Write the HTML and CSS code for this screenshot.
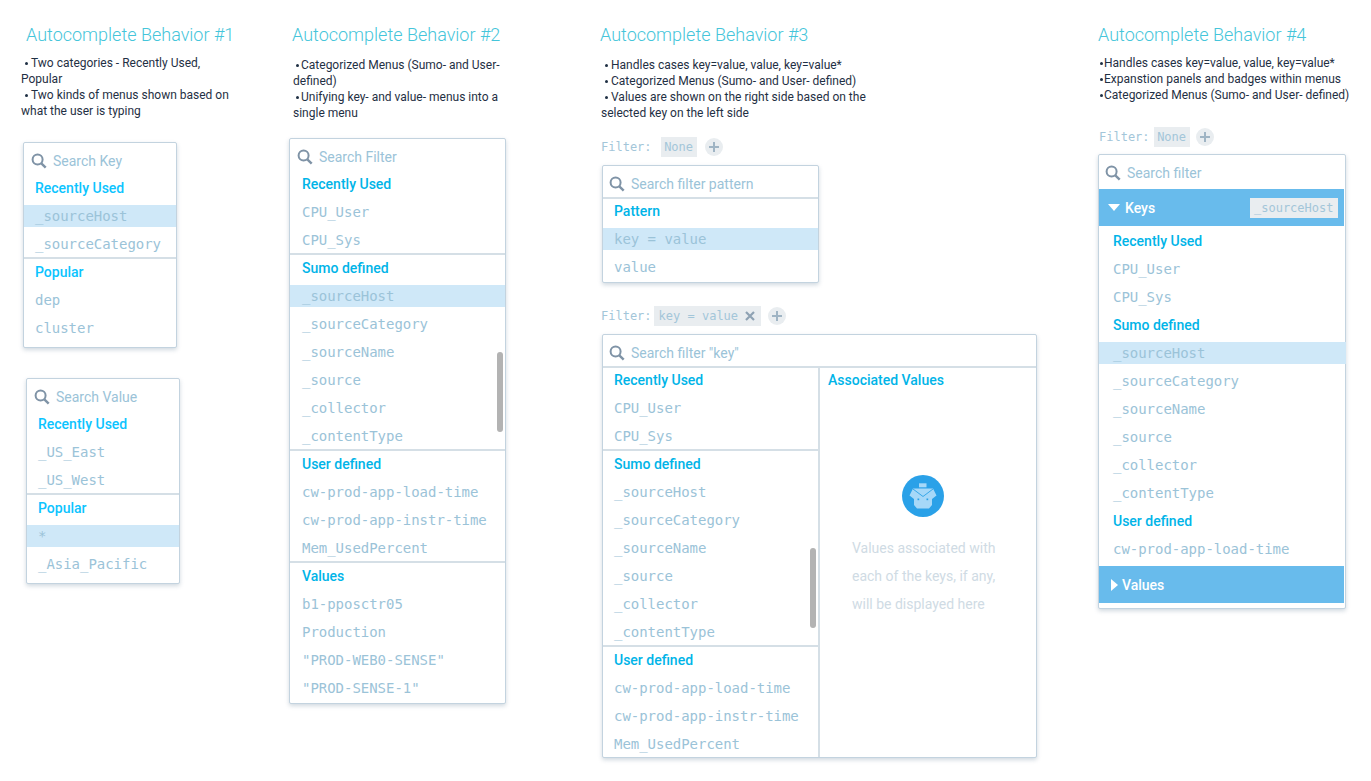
FILE: index.html
```html
<!DOCTYPE html>
<html lang="en">
<head>
<meta charset="utf-8">
<title>Autocomplete Behavior</title>
<link rel="stylesheet" href="styles.css">
</head>
<body>
<svg class="defs" width="0" height="0"><symbol id="s" viewBox="0 0 16 16"><circle cx="6.6" cy="6.6" r="5" fill="none" stroke="#7f93a6" stroke-width="2"/><path d="M10.3 10.3l4.4 4.4" stroke="#7f93a6" stroke-width="2.4" fill="none"/></symbol></svg>
<main class="page">
  <section class="col col1">
    <h2 class="title">Autocomplete Behavior #1</h2>
    <p class="notes"><span class="b"></span>Two categories - Recently Used, Popular<br><span class="b"></span>Two kinds of menus shown based on what the user is typing</p>
    <div class="box box-key">
      <div class="search"><svg class="ic"><use href="#s"/></svg>Search Key</div>
      <div class="sec">
        <div class="head bright">Recently Used</div>
        <div class="row hl">_sourceHost</div>
        <div class="row">_sourceCategory</div>
      </div>
      <div class="sec">
        <div class="head bright">Popular</div>
        <div class="row">dep</div>
        <div class="row">cluster</div>
      </div>
    </div>
    <div class="box box-value">
      <div class="search"><svg class="ic"><use href="#s"/></svg>Search Value</div>
      <div class="sec">
        <div class="head bright">Recently Used</div>
        <div class="row">_US_East</div>
        <div class="row">_US_West</div>
      </div>
      <div class="sec">
        <div class="head bright">Popular</div>
        <div class="row hl">*</div>
        <div class="row">_Asia_Pacific</div>
      </div>
    </div>
  </section>

  <section class="col col2">
    <h2 class="title">Autocomplete Behavior #2</h2>
    <p class="notes"><span class="b"></span>Categorized Menus (Sumo- and User-defined)<br><span class="b"></span>Unifying key- and value- menus into a single menu</p>
    <div class="box box-two">
      <div class="search"><svg class="ic"><use href="#s"/></svg>Search Filter</div>
      <div class="sec">
        <div class="head">Recently Used</div>
        <div class="row">CPU_User</div>
        <div class="row">CPU_Sys</div>
      </div>
      <div class="sec scrolled">
        <div class="head">Sumo defined</div>
        <div class="row hl">_sourceHost</div>
        <div class="row">_sourceCategory</div>
        <div class="row">_sourceName</div>
        <div class="row">_source</div>
        <div class="row">_collector</div>
        <div class="row">_contentType</div>
        <i class="thumb"></i>
      </div>
      <div class="sec">
        <div class="head">User defined</div>
        <div class="row">cw-prod-app-load-time</div>
        <div class="row">cw-prod-app-instr-time</div>
        <div class="row">Mem_UsedPercent</div>
      </div>
      <div class="sec">
        <div class="head">Values</div>
        <div class="row">b1-pposctr05</div>
        <div class="row">Production</div>
        <div class="row">"PROD-WEB0-SENSE"</div>
        <div class="row">"PROD-SENSE-1"</div>
      </div>
    </div>
  </section>

  <section class="col col3">
    <h2 class="title">Autocomplete Behavior #3</h2>
    <p class="notes"><span class="b"></span>Handles cases key=value, value, key=value*<br><span class="b"></span>Categorized Menus (Sumo- and User- defined)<br><span class="b"></span>Values are shown on the right side based on the selected key on the left side</p>
    <div class="filter f-none"><span class="flabel">Filter:</span><span class="chip none">None</span><span class="plus"></span></div>
    <div class="box box-pattern">
      <div class="search ruled"><svg class="ic"><use href="#s"/></svg>Search filter pattern</div>
      <div class="sec">
        <div class="head">Pattern</div>
        <div class="row hl">key = value</div>
        <div class="row">value</div>
      </div>
    </div>
    <div class="filter f-kv"><span class="flabel">Filter:</span><span class="chip kv">key = value<svg class="x" viewBox="0 0 10 10"><path d="M1 1l8 8M9 1l-8 8" stroke="#8ea2b3" stroke-width="2.2"/></svg></span><span class="plus"></span></div>
    <div class="box box-wide">
      <div class="search ruled"><svg class="ic"><use href="#s"/></svg>Search filter "key"</div>
      <div class="split">
        <div class="left">
          <div class="sec">
            <div class="head">Recently Used</div>
            <div class="row">CPU_User</div>
            <div class="row">CPU_Sys</div>
          </div>
          <div class="sec scrolled">
            <div class="head">Sumo defined</div>
            <div class="row">_sourceHost</div>
            <div class="row">_sourceCategory</div>
            <div class="row">_sourceName</div>
            <div class="row">_source</div>
            <div class="row">_collector</div>
            <div class="row">_contentType</div>
            <i class="thumb"></i>
          </div>
          <div class="sec">
            <div class="head">User defined</div>
            <div class="row">cw-prod-app-load-time</div>
            <div class="row">cw-prod-app-instr-time</div>
            <div class="row">Mem_UsedPercent</div>
          </div>
        </div>
        <div class="right">
          <div class="head assoc">Associated Values</div>
          <svg class="bot" viewBox="0 0 42 42">
            <circle cx="21" cy="21" r="21" fill="#2aa1e8"/>
            <rect x="17" y="8.300" width="7.500" height="4" fill="#a6d8f8"/>
            <path d="M11 13.500H31L34.500 20.500 30 24V30L27 33.500H15L12 30V24L7.500 20.500Z" fill="#a6d8f8"/>
            <path d="M11 14l10 7.500 10-7.500" fill="none" stroke="#2aa1e8" stroke-width=".9"/>
            <rect x="15.500" y="23.500" width="1.700" height="1.700" fill="#2aa1e8"/>
            <rect x="24.500" y="23.500" width="1.700" height="1.700" fill="#2aa1e8"/>
          </svg>
          <p class="empty">Values associated with<br>each of the keys, if any,<br>will be displayed here</p>
        </div>
      </div>
    </div>
  </section>

  <section class="col col4">
    <h2 class="title">Autocomplete Behavior #4</h2>
    <p class="notes"><span class="b"></span>Handles cases key=value, value, key=value*<br><span class="b"></span>Expanstion panels and badges within menus<br><span class="b"></span>Categorized Menus (Sumo- and User- defined)</p>
    <div class="filter f-four"><span class="flabel">Filter:</span><span class="chip none">None</span><span class="plus"></span></div>
    <div class="box box-four">
      <div class="search"><svg class="ic"><use href="#s"/></svg>Search filter</div>
      <div class="bar keys"><i class="tri down"></i>Keys<span class="chip badge">_sourceHost</span></div>
      <div class="plain first">
        <div class="head">Recently Used</div>
        <div class="row">CPU_User</div>
        <div class="row">CPU_Sys</div>
        <div class="head">Sumo defined</div>
        <div class="row hl">_sourceHost</div>
        <div class="row">_sourceCategory</div>
        <div class="row">_sourceName</div>
        <div class="row">_source</div>
        <div class="row">_collector</div>
        <div class="row">_contentType</div>
        <div class="head">User defined</div>
        <div class="row">cw-prod-app-load-time</div>
      </div>
      <div class="bar vals"><i class="tri side"></i>Values</div>
    </div>
  </section>
</main>
</body>
</html>
```

FILE: styles.css
```css
* { box-sizing: border-box; }
html, body { margin: 0; padding: 0; background: #fff; }
body { width: 1371px; height: 781px; overflow: hidden; font-family: Roboto, "Noto Sans CJK JP", sans-serif; }
.defs { position: absolute; }
.page { display: flex; align-items: flex-start; }
.col { flex: none; }
.col1 { width: 268px; margin-left: 21px; }
.col2 { width: 311px; }
.col3 { width: 498px; }
.col4 { width: 273px; }

.title { margin: 24px 0 0; height: 22px; font-size: 18px; line-height: 22px; font-weight: 300; color: #45c5da; white-space: nowrap; }
.col1 .title { margin-left: 5px; }
.col2 .title { margin-left: 3px; }

.notes { height: 64px; margin: 9px 0 0; font-size: 12px; line-height: 16px; color: #1f3044; }
.b { display: inline-block; width: 10px; height: 16px; padding-top: 7px; vertical-align: top; }
.b::before { content: ""; display: block; width: 3px; height: 3px; margin: 0 auto; border-radius: 50%; background: #1f3044; }
.col1 .notes { width: 215px; }
.col2 .notes { width: 218px; margin-top: 11px; margin-left: 4px; }
.col2 .b { width: 8px; }
.col3 .notes { width: 270px; margin-top: 11px; margin-left: 1px; }
.col4 .notes { width: 262px; height: 48px; white-space: nowrap; }
.col4 .b { width: 6px; }

.box { background: #fff; border: 1px solid #c3d3df; border-radius: 2px; box-shadow: 0 2px 4px rgba(90, 120, 145, .28); }
.box-key { width: 154px; margin: 23px 0 0 2px; padding-bottom: 8px; }
.box-value { width: 154px; margin: 30px 0 0 5px; padding-bottom: 8px; }
.box-two { width: 217px; margin-top: 17px; padding-bottom: 4px; }
.box-pattern { width: 217px; margin: 8px 0 0 2px; padding-bottom: 4px; }
.box-wide { width: 435px; margin: 8px 0 0 2px; }
.box-four { width: 248px; margin-top: 7px; padding-bottom: 5px; }

.search { display: flex; align-items: center; height: 32px; padding: 4px 0 0 7px; font-size: 14px; color: #9bc3d8; }
.col3 .search, .col4 .search { padding-left: 6px; }
.search.ruled { height: 33px; padding-top: 4px; border-bottom: 2px solid #d5dfe6; }
.ic { width: 16px; height: 16px; margin-right: 6px; flex: none; }

.sec { position: relative; }
.sec + .sec { border-top: 2px solid #d5dfe6; margin-top: 2px; }
.head { height: 22px; margin-top: 6px; padding-left: 12px; font-size: 14px; line-height: 22px; font-weight: 500; color: #00b4e8; white-space: nowrap; }
.search + .sec .head { margin-top: 2px; }
.sec + .sec .head { margin-top: 2px; }
.head.bright { color: #0cc4ff; }
.row { height: 22px; margin-top: 6px; padding-left: 12px; font-family: "DejaVu Sans Mono", monospace; font-size: 14px; letter-spacing: -.03px; line-height: 22px; color: #9bc3d8; white-space: nowrap; }
.row.hl { background: #cfe8f8; }
.ruled + .sec .head { margin-top: 1px; }
.col1 .head, .col1 .row, .col3 .head, .col3 .row { padding-left: 11px; }
.col3 .assoc { padding-left: 8px; }

.thumb { position: absolute; right: 2px; bottom: 15px; width: 6px; height: 80px; border-radius: 3px; background: #b3b3b3; }

.filter { display: flex; align-items: center; height: 20px; }
.flabel { font-family: "DejaVu Sans Mono", monospace; font-size: 12px; color: #a3c6d9; }
.chip { display: flex; align-items: center; height: 20px; background: #e9edf0; font-family: "DejaVu Sans Mono", monospace; font-size: 12px; color: #a3c6d9; white-space: nowrap; }
.chip.none { width: 36px; justify-content: center; }
.chip.kv { width: 107px; padding-left: 5px; margin-left: 2px; }
.plus { position: relative; width: 18px; height: 18px; margin-left: 8px; border-radius: 50%; background: #e9edf0; }
.plus::before, .plus::after { content: ""; position: absolute; background: #9fb4c4; }
.plus::before { left: 4px; top: 8px; width: 10px; height: 2px; }
.plus::after { left: 8px; top: 4px; width: 2px; height: 10px; }
.f-none { margin: 16px 0 0 1px; }
.f-none .chip { margin-left: 9px; }
.f-kv { margin: 23px 0 0 1px; }
.f-kv .plus { margin-left: 7px; }
.f-four { margin: 24px 0 0 1px; }
.f-four .chip { margin-left: 4px; }
.f-four .plus { margin-left: 6px; }
.x { width: 10px; height: 10px; margin-left: 7px; }

.split { display: flex; }
.left { width: 217px; padding-bottom: 2px; border-right: 2px solid #d5dfe6; }
.right { flex: 1; }
.col3 .right .assoc { margin-top: 1px; }
.left > .sec:first-child > .head { margin-top: 1px; }
.bot { display: block; width: 42px; height: 42px; margin: 84px 0 0 82px; }
.empty { margin: 17px 0 0 32px; font-size: 14px; line-height: 28px; color: #cfdbe4; white-space: nowrap; }

.bar { display: flex; align-items: center; height: 37px; width: 245px; padding-left: 9px; background: #68bbec; color: #fff; font-size: 14px; font-weight: 500; }
.keys { margin-top: 2px; }
.vals { margin-top: 6px; }
.tri { flex: none; width: 0; height: 0; }
.tri.down { margin-right: 5px; border-left: 6px solid transparent; border-right: 6px solid transparent; border-top: 7px solid #fff; }
.tri.side { margin: 0 4px 0 3px; border-top: 6px solid transparent; border-bottom: 6px solid transparent; border-left: 7px solid #fff; }
.badge { margin-left: auto; margin-right: 6px; width: 88px; padding-left: 4px; font-weight: 400; }
.plain .head, .plain .row { padding-left: 14px; }
.plain .row.hl { margin-right: -1px; }
.plain .head:first-child { margin-top: 4px; }
```
